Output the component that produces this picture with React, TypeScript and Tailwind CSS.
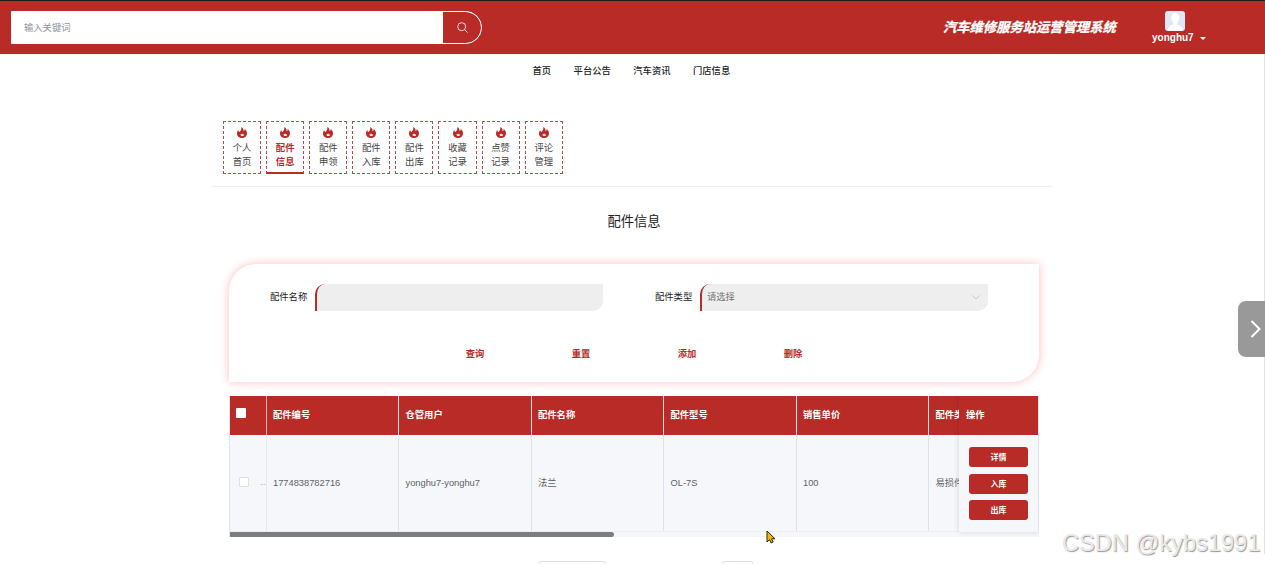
import React from 'react';

const TABS = [
  ['个人', '首页'],
  ['配件', '信息'],
  ['配件', '申领'],
  ['配件', '入库'],
  ['配件', '出库'],
  ['收藏', '记录'],
  ['点赞', '记录'],
  ['评论', '管理'],
];

const COLUMNS = [
  { title: '配件编号', value: '1774838782716' },
  { title: '仓管用户', value: 'yonghu7-yonghu7' },
  { title: '配件名称', value: '法兰' },
  { title: '配件型号', value: 'OL-7S' },
  { title: '销售单价', value: '100' },
  { title: '配件类型', value: '易损件' },
];

const FlameIcon = () => (
  <svg className="h-[11px] w-[10px] shrink-0" viewBox="0 0 20 22" fill="#b92b27">
    <path
      fillRule="evenodd"
      d="M8.500 0c3.500 1.500 5 4.500 4.600 8.500 1.500-.8 2.300-2.300 2.300-4.500 3 2 4.600 5.500 4.600 9 0 5.500-4 9-9.800 9C4 22 0 18.500 0 13.500 0 10.500 1 8 2.500 6c.3 2.200 1 3.300 2.300 4C8 7.500 9.300 4 8.500 0ZM6.500 14.500c.3 2.300 1.800 3.700 4 3.700 2.300 0 3.700-1.400 3.700-3.400-1.600.8-3.400.3-3.700-1.600-1 .3-1.700.9-2 1.800-.8.2-1.500 0-2-.5Z"
    />
  </svg>
);

const Header = () => (
  <header className="flex h-[54px] border-t border-[#1d1d1f] bg-[#b92b27] text-white">
    <div className="mt-[10px] ml-[11px] flex h-[33px] w-[471px] overflow-hidden rounded-r-full border border-white bg-white">
      <div className="flex-1 pl-[12px] leading-[32px] text-[#8c959d]">输入关键词</div>
      <button type="button" className="flex w-[38px] items-center justify-center rounded-r-full bg-[#b92b27]">
        <svg className="h-[11px] w-[11px]" viewBox="0 0 11 11" fill="none" stroke="#fff" strokeWidth={0.8}>
          <circle cx="4.700" cy="4.700" r="4" />
          <path d="M7.600 7.600l2.900 2.900" />
        </svg>
      </button>
    </div>
    <div className="mt-[17px] ml-[461px] w-[174px] text-[13.300px] leading-[20px] font-bold whitespace-nowrap italic [-webkit-text-stroke:0.3px_white]">
      汽车维修服务站运营管理系统
    </div>
    <div className="mt-[10px] ml-[35px] flex w-[54px] flex-col">
      <svg className="ml-[13px] h-5 w-5 rounded-[3px]" viewBox="0 0 20 20">
        <rect width="20" height="20" fill="#e1e8f5" />
        <ellipse cx="10.200" cy="7" rx="4" ry="5" fill="#fff" />
        <path d="M8 10h4.400v3.700c3.500.8 5 2.300 5.300 6.300H2.700c.3-4 1.800-5.500 5.300-6.300z" fill="#fff" />
      </svg>
      <div className="flex items-center text-[10px] leading-[13px] font-bold">
        yonghu7
        <span className="mt-px ml-[6px] border-x-[3px] border-t-[3px] border-x-transparent border-t-white" />
      </div>
    </div>
  </header>
);

const SearchPanel = () => (
  <section className="mt-[32px] ml-[17px] h-[118px] w-[810px] rounded-tl-[27px] rounded-br-[27px] bg-white pt-5 shadow-[0_0_10px_rgba(255,0,0,0.26)]">
    <div className="flex leading-[27px] text-[#222]">
      <label className="ml-[41px] w-[45px]">配件名称</label>
      <div className="h-[27px] w-[288px] rounded-tl-[10px] rounded-br-[10px] border-l-2 border-[#b92b27] bg-[#eee]" />
      <label className="ml-[52px] w-[45px]">配件类型</label>
      <div className="flex h-[27px] w-[288px] items-center justify-between rounded-tl-[10px] rounded-br-[10px] border-l-2 border-[#b92b27] bg-[#eee] pr-2 pl-[5px] text-[#757575]">
        请选择
        <svg className="h-[5px] w-[8px]" viewBox="0 0 8 5" fill="none" stroke="#c0c4cc" strokeWidth={0.9}>
          <path d="M.5.5L4 4l3.500-3.500" />
        </svg>
      </div>
    </div>
    <div className="mt-[36px] ml-[193px] flex leading-[14px] font-bold text-[#b92b27]">
      {['查询', '重置', '添加', '删除'].map((text) => (
        <button key={text} type="button" className="w-[106px] text-center">
          {text}
        </button>
      ))}
    </div>
  </section>
);

const PartsTable = () => (
  <section className="relative mt-[14px] ml-[17px] h-[141px] w-[810px] overflow-hidden border-l border-[#dfe3ea] bg-[#f5f7fa]">
    <div className="flex h-[39px] bg-[#b92b27] font-bold text-white">
      <div className="w-[36.500px] shrink-0 border-r border-[#dcb0af] pt-[12px] pl-[6px]">
        <div className="h-[10px] w-[10px] rounded-[1px] bg-white" />
      </div>
      {COLUMNS.map((col) => (
        <div
          key={col.title}
          className="w-[132.500px] shrink-0 overflow-hidden border-r border-[#f0dedd] pl-[6.500px] leading-[39px] whitespace-nowrap last:w-[30px] last:border-r-0"
        >
          {col.title}
        </div>
      ))}
    </div>
    <div className="flex h-[97px] border-b border-[#ebeef5] text-[#606266]">
      <div className="flex w-[36.500px] shrink-0 items-center justify-between border-r border-[#e6e8ec] pl-[9px]">
        <span className="mb-[3px] h-[10px] w-[10px] rounded-[1px] border border-[#dcdfe6] bg-white" />
        <span className="leading-none text-[#a5a7aa]">..</span>
      </div>
      {COLUMNS.map((col) => (
        <div
          key={col.title}
          className="w-[132.500px] shrink-0 overflow-hidden border-r border-[#dfe1e5] pl-[6.500px] leading-[97px] whitespace-nowrap last:w-[30px] last:border-r-0"
        >
          {col.value}
        </div>
      ))}
    </div>
    <div className="-ml-px h-[5px] w-[385px] rounded-full bg-[#7d7d7f]" />
    {/* fixed operation column */}
    <div className="absolute top-0 right-0 h-[136px] w-[80px] border-r border-[#e1e3e8] bg-[#f5f7fa] shadow-[0_0_6px_rgba(0,0,0,0.14)]">
      <div className="h-[39px] bg-[#b92b27] pl-[7px] leading-[39px] font-bold text-white">操作</div>
      <div className="flex flex-col gap-[6.500px] pt-[12px] pl-[10px]">
        {['详情', '入库', '出库'].map((text) => (
          <button
            key={text}
            type="button"
            className="h-[20px] w-[59px] rounded-[3px] bg-[#b92b27] text-[8px] leading-[21px] font-bold text-white"
          >
            {text}
          </button>
        ))}
      </div>
    </div>
  </section>
);

export default function App() {
  return (
    <div className="relative h-[564px] w-[1265px] overflow-hidden bg-white font-['Liberation_Sans','Noto_Sans_CJK_SC',sans-serif] text-[9.300px]">
      <Header />
      <nav className="mt-[8px] ml-[532.500px] flex gap-[22.500px] leading-[16px] font-medium text-[#222]">
        {['首页', '平台公告', '汽车资讯', '门店信息'].map((item) => (
          <a key={item} className="font-['Noto_Sans_CJK_SC',sans-serif]">{item}</a>
        ))}
      </nav>

      <main className="mt-[43px] ml-[212px] w-[840px]">
        <div className="flex h-[66px] gap-[5px] border-b border-[#eee] pl-[11px]">
          {TABS.map(([top, bottom], index) => (
            <div
              key={top + bottom}
              className={`flex h-[53px] w-[38.100px] flex-col items-center border border-dashed border-[#b04e4b] pt-[5px] leading-[14px] ${
                index === 1 ? 'border-b-2 [border-bottom-style:solid] border-b-[#b92b27] font-bold text-[#b92b27]' : 'text-[#444]'
              }`}
            >
              <FlameIcon />
              <span className="mt-[3px]">{top}</span>
              <span>{bottom}</span>
            </div>
          ))}
        </div>
        <h1 className="mt-[25px] ml-[4px] text-center text-[13.300px] leading-[20px] text-[#222]">配件信息</h1>
        <SearchPanel />
        <PartsTable />
        <div className="mt-[24px] ml-[327px] flex gap-[116px]">
          <div className="h-[19px] w-[67px] rounded-[2px] border border-[#dcdfe6]" />
          <div className="h-[19px] w-[31px] rounded-[2px] border border-[#dcdfe6]" />
        </div>
      </main>

      <div className="absolute top-[54px] right-0 h-[500px] w-px bg-[#e2e2e2]" />
      <button
        type="button"
        className="absolute top-[301px] right-0 flex h-[56px] w-[27px] items-center justify-end rounded-l-[8px] bg-[#999] pr-[4px]"
      >
        <svg className="h-[18px] w-[11px]" viewBox="0 0 11 18" fill="none" stroke="#fff" strokeWidth={2}>
          <path d="M1.500 1l8 8-8 8" />
        </svg>
      </button>
      <svg className="absolute top-[530px] left-[766px] h-[14px] w-[10px]" viewBox="0 0 10 14">
        <path d="M1 1v11l2.500-2.300L5.200 13l2-1-1.700-3.200H9z" fill="#f5b800" stroke="#2b2516" strokeWidth={1} />
      </svg>
      <div className="absolute top-[529px] left-[1062px] text-[23.600px] leading-[28px] whitespace-nowrap text-[#e9e9e9] [text-shadow:1px_1px_1px_#999]">
        CSDN @kybs1991
      </div>
    </div>
  );
}
